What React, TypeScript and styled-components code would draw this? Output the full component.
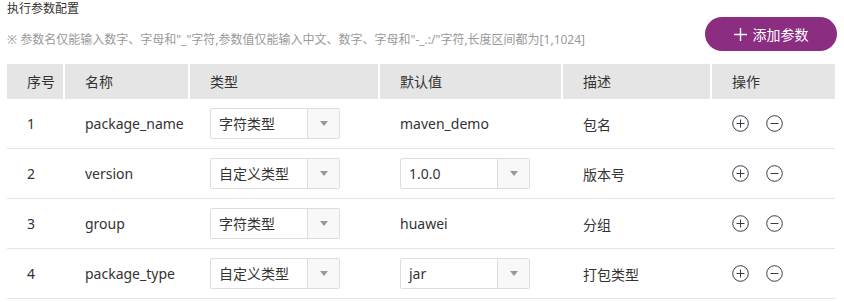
import styled, { createGlobalStyle } from 'styled-components';

const GlobalStyle = createGlobalStyle`
  body {
    margin: 0;
    background: #fff;
    font-family: 'Noto Sans', 'Noto Sans CJK SC', sans-serif;
    color: #333;
  }
`;

const Wrapper = styled.div`
  width: 844px;
  height: 302px;
  padding: 0 8px 0 7px;
  box-sizing: border-box;
  overflow: hidden;
`;

const Title = styled.div`
  font-size: 12px;
  line-height: 18px;
  color: #333;
`;

const TopBar = styled.div`
  display: flex;
  justify-content: space-between;
  align-items: flex-end;
  margin-top: -1px;
`;

const Note = styled.div`
  font-size: 12px;
  color: #999;
  line-height: 16px;
  padding-bottom: 3px;
`;

const AddButton = styled.button`
  width: 132px;
  height: 34px;
  border: none;
  border-radius: 17px;
  background: #8b2d81;
  color: #fff;
  font-family: inherit;
  font-size: 14px;
  display: flex;
  align-items: center;
  justify-content: center;
  gap: 6px;
  margin-right: -1px;
  cursor: pointer;

  svg {
    width: 13px;
    height: 13px;
  }
`;

const Table = styled.div`
  margin-top: 13px;
  width: 828px;
`;

const cols = '56px 123px 188px 181px 147px 123px';

const HeadRow = styled.div`
  display: grid;
  grid-template-columns: ${cols};
  column-gap: 2px;
  height: 35px;
`;

const HeadCell = styled.div`
  background: #e5e5e5;
  font-size: 14px;
  line-height: 35px;
  padding-left: 20px;
  color: #333;
`;

const Row = styled.div`
  display: grid;
  grid-template-columns: ${cols};
  column-gap: 2px;
  height: 49px;
  border-bottom: 1px solid #e5e5e5;
  align-items: center;
`;

const Cell = styled.div`
  font-size: 14px;
  padding-left: 20px;
  color: #333;
  white-space: nowrap;
`;

const Select = styled.div`
  display: flex;
  width: 130px;
  height: 31px;
  box-sizing: border-box;
  border: 1px solid #ddd;
  border-radius: 2px;
`;

const SelectText = styled.div`
  flex: 1;
  font-size: 14px;
  line-height: 29px;
  padding-left: 8px;
  color: #333;
`;

const SelectArrow = styled.div`
  width: 31px;
  border-left: 1px solid #ddd;
  background: #f8f8f8;
  display: flex;
  align-items: center;
  justify-content: center;

  &::after {
    content: '';
    border-left: 4px solid transparent;
    border-right: 4px solid transparent;
    border-top: 5px solid #999;
  }
`;

const Actions = styled.div`
  display: flex;
  gap: 17px;
  padding-left: 20px;
`;

const IconBtn = styled.svg`
  width: 17px;
  height: 17px;
  cursor: pointer;
`;

function PlusIcon() {
  return (
    <IconBtn viewBox="0 0 17 17" fill="none" stroke="#3a3a46" strokeWidth="1">
      <circle cx="8.5" cy="8.5" r="7.8" />
      <path d="M4.5 8.5h8M8.5 4.5v8" />
    </IconBtn>
  );
}

function MinusIcon() {
  return (
    <IconBtn viewBox="0 0 17 17" fill="none" stroke="#3a3a46" strokeWidth="1">
      <circle cx="8.5" cy="8.5" r="7.8" />
      <path d="M4.5 8.5h8" />
    </IconBtn>
  );
}

type Param = {
  name: string;
  type: string;
  value: string;
  valueSelect: boolean;
  desc: string;
};

const params: Param[] = [
  { name: 'package_name', type: '字符类型', value: 'maven_demo', valueSelect: false, desc: '包名' },
  { name: 'version', type: '自定义类型', value: '1.0.0', valueSelect: true, desc: '版本号' },
  { name: 'group', type: '字符类型', value: 'huawei', valueSelect: false, desc: '分组' },
  { name: 'package_type', type: '自定义类型', value: 'jar', valueSelect: true, desc: '打包类型' },
];

function Dropdown({ text }: { text: string }) {
  return (
    <Select>
      <SelectText>{text}</SelectText>
      <SelectArrow />
    </Select>
  );
}

export default function App() {
  return (
    <Wrapper>
      <GlobalStyle />
      <Title>执行参数配置</Title>
      <TopBar>
        <Note>※ 参数名仅能输入数字、字母和"_"字符,参数值仅能输入中文、数字、字母和"-_.:/"字符,长度区间都为[1,1024]</Note>
        <AddButton>
          <svg viewBox="0 0 13 13" stroke="#fff" strokeWidth="1.4">
            <path d="M0 6.5h13M6.5 0v13" />
          </svg>
          添加参数
        </AddButton>
      </TopBar>
      <Table>
        <HeadRow>
          <HeadCell>序号</HeadCell>
          <HeadCell>名称</HeadCell>
          <HeadCell>类型</HeadCell>
          <HeadCell>默认值</HeadCell>
          <HeadCell>描述</HeadCell>
          <HeadCell>操作</HeadCell>
        </HeadRow>
        {params.map((p, i) => (
          <Row key={p.name}>
            <Cell>{i + 1}</Cell>
            <Cell>{p.name}</Cell>
            <Cell>
              <Dropdown text={p.type} />
            </Cell>
            <Cell>{p.valueSelect ? <Dropdown text={p.value} /> : p.value}</Cell>
            <Cell>{p.desc}</Cell>
            <Actions>
              <PlusIcon />
              <MinusIcon />
            </Actions>
          </Row>
        ))}
      </Table>
    </Wrapper>
  );
}
